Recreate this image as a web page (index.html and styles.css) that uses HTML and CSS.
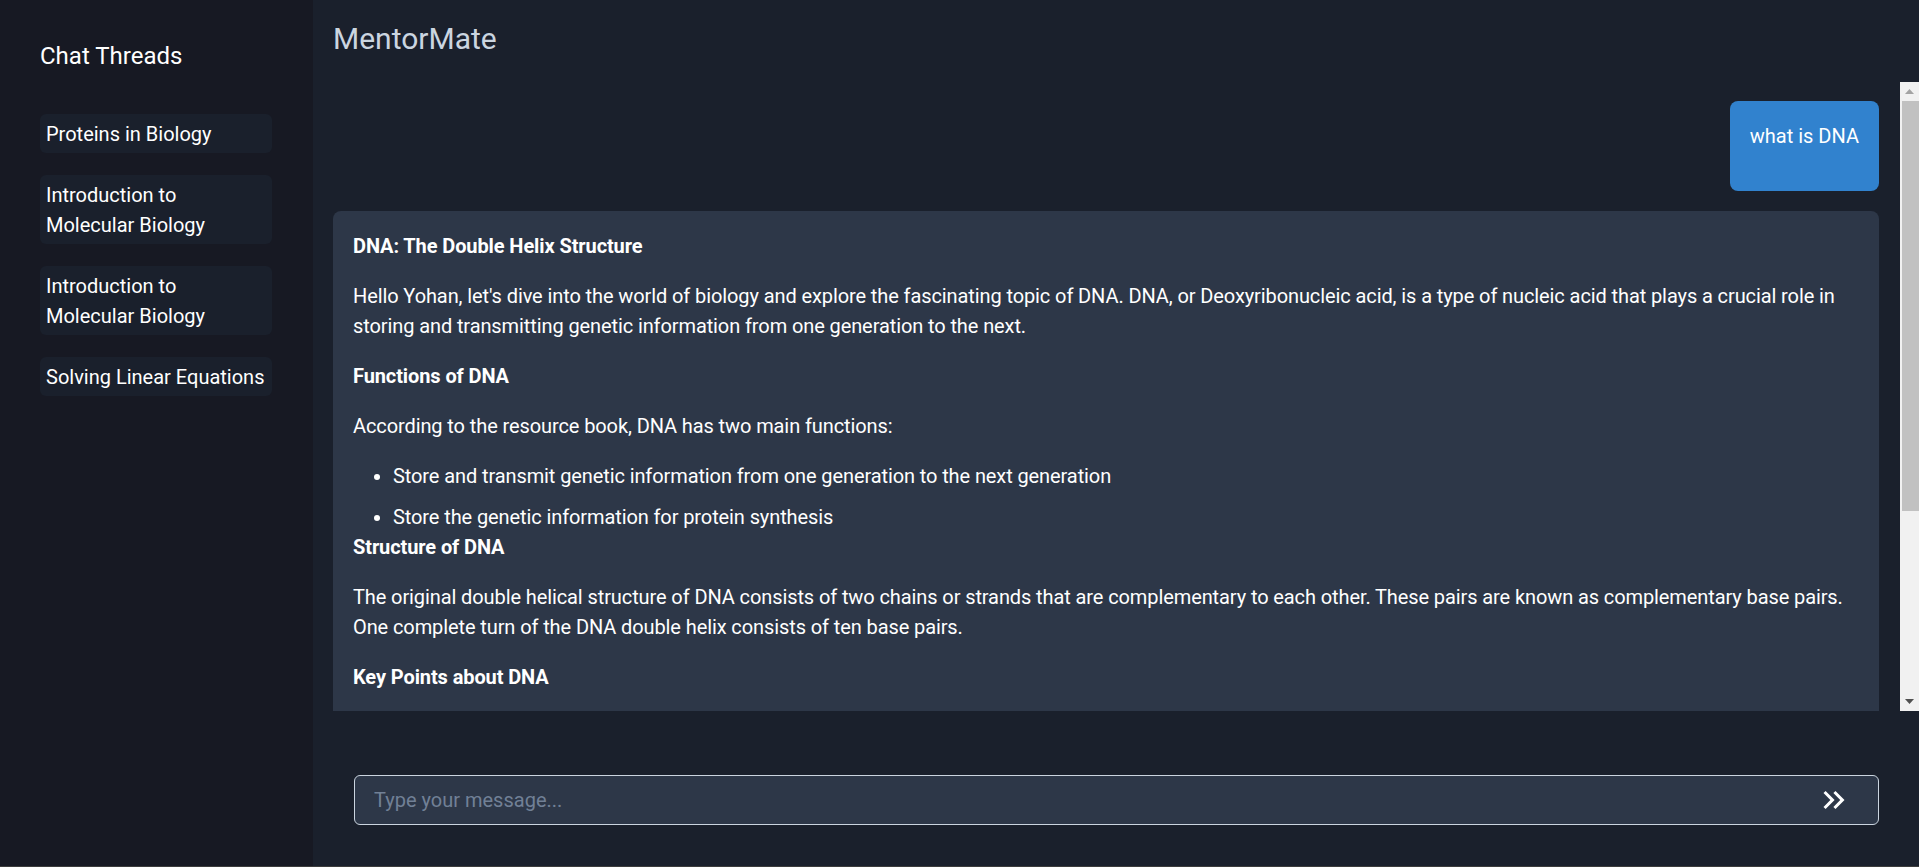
FILE: index.html
```html
<!DOCTYPE html>
<html lang="en">
<head>
<meta charset="utf-8">
<title>MentorMate</title>
<link rel="stylesheet" href="styles.css">
</head>
<body>
<div class="app">
  <aside class="sidebar">
    <h2 class="sidebar-title">Chat Threads</h2>
    <ul class="thread-list">
      <li class="thread">Proteins in Biology</li>
      <li class="thread">Introduction to Molecular Biology</li>
      <li class="thread">Introduction to Molecular Biology</li>
      <li class="thread">Solving Linear Equations</li>
    </ul>
  </aside>
  <main class="main">
    <header class="header">MentorMate</header>
    <div class="chat-area">
      <section class="chat">
        <div class="bubble user">
          <p>what is DNA</p>
        </div>
        <div class="bubble bot">
          <p><strong>DNA: The Double Helix Structure</strong></p>
          <p>Hello Yohan, let's dive into the world of biology and explore the fascinating topic of DNA. DNA, or Deoxyribonucleic acid, is a type of nucleic acid that plays a crucial role in storing and transmitting genetic information from one generation to the next.</p>
          <p><strong>Functions of DNA</strong></p>
          <p>According to the resource book, DNA has two main functions:</p>
          <ul>
            <li>Store and transmit genetic information from one generation to the next generation</li>
            <li>Store the genetic information for protein synthesis</li>
          </ul>
          <p><strong>Structure of DNA</strong></p>
          <p>The original double helical structure of DNA consists of two chains or strands that are complementary to each other. These pairs are known as complementary base pairs. One complete turn of the DNA double helix consists of ten base pairs.</p>
          <p><strong>Key Points about DNA</strong></p>
        </div>
      </section>
      <div class="scrollbar" aria-hidden="true">
        <div class="sb-btn">
          <svg width="19" height="19" viewBox="0 0 19 19"><path d="M5 12h9l-4.5-5z" fill="#a3a3a3"/></svg>
        </div>
        <div class="sb-thumb"></div>
        <div class="sb-track"></div>
        <div class="sb-btn">
          <svg width="19" height="19" viewBox="0 0 19 19"><path d="M5 7h9l-4.5 5z" fill="#505050"/></svg>
        </div>
      </div>
    </div>
    <footer class="composer">
      <div class="input-box">
        <input class="input" type="text" placeholder="Type your message...">
        <button class="send" type="button" aria-label="Send">
          <svg viewBox="0 0 24 24" width="36" height="36" fill="#ffffff"><path d="M6.41 6 5 7.41 9.58 12 5 16.59 6.41 18l6-6-6-6zM13 6l-1.41 1.41L16.17 12l-4.58 4.59L13 18l6-6-6-6z"/></svg>
        </button>
      </div>
    </footer>
  </main>
</div>
</body>
</html>
```
FILE: styles.css
```css
* { box-sizing: border-box; }

html, body {
  margin: 0;
  height: 100%;
}

body {
  font-family: Roboto, "Open Sans", sans-serif;
  font-size: 20px;
  line-height: 30px;
  color: #ffffff;
  background: #1a202c;
  overflow: hidden;
}

.app {
  display: flex;
  height: 867px;
  border-bottom: 1px solid #3d3d3d;
}

.sidebar {
  width: 313px;
  flex: 0 0 313px;
  background: #171923;
  padding: 40px 41px 40px 40px;
}

.sidebar-title {
  margin: 0 0 42px;
  font-size: 24px;
  line-height: 32px;
  font-weight: 400;
  color: #ffffff;
}

.thread-list {
  list-style: none;
  margin: 0;
  padding: 0;
  display: flex;
  flex-direction: column;
  gap: 22px;
}

.thread {
  background: #1a202c;
  border-radius: 6px;
  padding: 4.5px 6px;
  color: #ffffff;
}

.main {
  flex: 1;
  min-width: 0;
  display: flex;
  flex-direction: column;
  padding-left: 20px;
  background: #1a202c;
}

.header {
  height: 82px;
  flex: 0 0 82px;
  padding-top: 16px;
  font-size: 30px;
  line-height: 45px;
  color: #cbd5e0;
}

.chat-area {
  flex: 1;
  min-height: 0;
  display: flex;
}

.chat {
  flex: 1;
  min-width: 0;
  overflow: hidden;
  padding: 19px 21px 0 0;
  display: flex;
  flex-direction: column;
  gap: 20px;
}

.scrollbar {
  flex: 0 0 19px;
  display: flex;
  flex-direction: column;
  background: #f1f1f1;
}

.sb-btn {
  flex: 0 0 19px;
  height: 19px;
  display: flex;
}

.sb-thumb {
  flex: 0 0 410px;
  margin-left: 2px;
  background: #c1c1c1;
}

.sb-track {
  flex: 1;
}

.bubble {
  border-radius: 8px;
  padding: 20px;
  flex: 0 0 auto;
}

.bubble p {
  margin: 0 0 20px;
}

.bubble strong {
  font-weight: 700;
}

.bubble ul {
  margin: 0;
  padding-left: 40px;
}

.bubble li + li {
  margin-top: 11px;
}

.user {
  align-self: flex-end;
  background: #3182ce;
}

.bot {
  background: #2d3748;
  letter-spacing: -0.1px;
}

.composer {
  height: 155px;
  flex: 0 0 155px;
  padding: 64px 40px 0 21px;
}

.input-box {
  display: flex;
  align-items: center;
  height: 50px;
  background: #2d3748;
  border: 1px solid #cbd5e0;
  border-radius: 6px;
  padding: 0 26px 0 19px;
}

.input {
  flex: 1;
  min-width: 0;
  background: transparent;
  border: 0;
  outline: none;
  color: #ffffff;
  font-family: inherit;
  font-size: 20px;
  line-height: 30px;
  padding: 0;
}

.input::placeholder {
  color: #718096;
}

.send {
  display: flex;
  align-items: center;
  justify-content: center;
  width: 36px;
  height: 36px;
  padding: 0;
  border: 0;
  background: transparent;
  cursor: pointer;
}
```
